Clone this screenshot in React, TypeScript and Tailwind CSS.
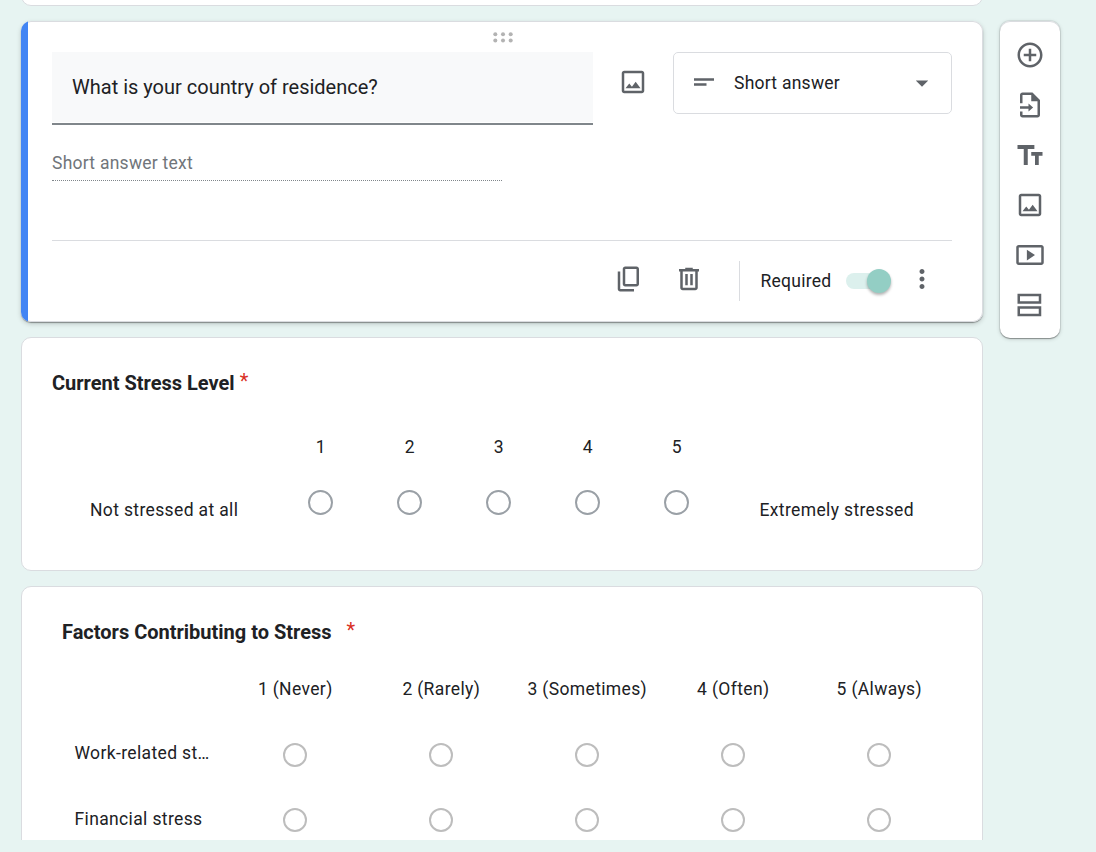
import type { ReactNode } from 'react';

const paths = {
  image:
    'M19 5v14H5V5h14m0-2H5c-1.1 0-2 .9-2 2v14c0 1.1.9 2 2 2h14c1.1 0 2-.9 2-2V5c0-1.1-.9-2-2-2zm-4.86 8.86l-3 3.87L9 13.14 6 17h12l-3.86-5.14z',
  shortText: 'M4 9h16v2H4V9zm0 4h10v2H4v-2z',
  arrow: 'M7 10l5 5 5-5z',
  copy: 'M9 18c-1.1 0-2-.9-2-2V4c0-1.1.9-2 2-2h9c1.1 0 2 .9 2 2v12c0 1.1-.9 2-2 2H9zm0-2h9V4H9v12zm-4 6c-1.1 0-2-.9-2-2V6h2v14h11v2H5z',
  trash:
    'M15 4V3H9v1H4v2h1v13c0 1.1.9 2 2 2h10c1.1 0 2-.9 2-2V6h1V4h-5zm2 15H7V6h10v13zM9 8h2v9H9V8zm4 0h2v9h-2V8z',
  more: 'M12 8c1.1 0 2-.9 2-2s-.9-2-2-2-2 .9-2 2 .9 2 2 2zm0 2c-1.1 0-2 .9-2 2s.9 2 2 2 2-.9 2-2-.9-2-2-2zm0 6c-1.1 0-2 .9-2 2s.9 2 2 2 2-.9 2-2-.9-2-2-2z',
  add: 'M13 7h-2v4H7v2h4v4h2v-4h4v-2h-4V7zm-1-5C6.48 2 2 6.48 2 12s4.48 10 10 10 10-4.48 10-10S17.52 2 12 2zm0 18c-4.41 0-8-3.59-8-8s3.59-8 8-8 8 3.59 8 8-3.59 8-8 8z',
  importFile:
    'M14 2H6c-1.1 0-2 .9-2 2v6.500h2V4h7v5h5v11H6v-2.800H4V20c0 1.1.9 2 2 2h12c1.1 0 2-.9 2-2V8l-6-6zM4 13v2h6.800v2.200L14.500 14l-3.700-3.200V13H4z',
  title: 'M2 4v3.200h5V20h3.200V7.200h5.300V4H2zm20 5.500h-9v3h3V20h3v-7.500h3v-3z',
  video:
    'M9.500 7.700v8.600l6.500-4.300-6.500-4.300zM21 4H3c-1.100 0-2 .9-2 2v12c0 1.100.9 2 2 2h18c1.100 0 2-.9 2-2V6c0-1.100-.9-2-2-2zm0 14H3V6h18v12z',
  section:
    'M2 3v8h19V3H2zm17 6H4V5h15v4zM2 13v8h19v-8H2zm17 6H4v-4h15v4z',
};

function Icon({ name, className = '' }: { name: keyof typeof paths; className?: string }) {
  return (
    <svg viewBox="0 0 24 24" className={`h-[30px] w-[30px] shrink-0 fill-[#5f6368] ${className}`}>
      <path d={paths[name]} />
    </svg>
  );
}

function Card({ className = '', children }: { className?: string; children?: ReactNode }) {
  return (
    <section className={`rounded-[10px] border border-[#dadce0] bg-white ${className}`}>{children}</section>
  );
}

function QuestionEditor() {
  return (
    <section className="flex h-[301px] overflow-hidden rounded-[10px] bg-white shadow-[inset_0_0_0_1px_#dadce0,0_1px_1px_rgba(0,0,0,0.35),0_2px_5px_rgba(0,0,0,0.18)]">
      <div className="w-[7px] shrink-0 bg-[#4285f4]" />
      <div className="flex grow flex-col pr-[31px] pl-6">
        <div className="flex h-[31px] justify-center pt-[11px] pl-[2px]">
          <svg viewBox="0 0 20 12" className="h-3 w-5 fill-[#b3b3b3]">
            <circle cx="2.300" cy="2.200" r="2" />
            <circle cx="10" cy="2.200" r="2" />
            <circle cx="17.700" cy="2.200" r="2" />
            <circle cx="2.300" cy="8.500" r="2" />
            <circle cx="10" cy="8.500" r="2" />
            <circle cx="17.700" cy="8.500" r="2" />
          </svg>
        </div>
        <div className="flex items-start">
          <div className="w-[541px] border-b-2 border-[#80868b]">
            <div className="mb-px h-[70px] bg-[#f8f9fa] pt-[20px] pl-5 text-[20px] leading-[30px] tracking-normal">
              What is your country of residence?
            </div>
          </div>
          <Icon name="image" className="mt-[15px] ml-[25px]" />
          <div className="ml-[25px] flex h-[62px] w-[279px] items-start rounded-[5px] border border-[#dadce0] pt-[14px] pl-[15px]">
            <Icon name="shortText" />
            <span className="ml-[15px] w-[173px] leading-8">Short answer</span>
            <Icon name="arrow" className="mt-[1px]" />
          </div>
        </div>
        <div className="mt-[22px] h-[34px] w-[450px] border-b border-dotted border-[#80868b] leading-8 text-[#70757a]">
          Short answer text
        </div>
        <div className="mt-[59px] flex items-start border-t border-[#dadce0]">
          <Icon name="copy" className="mt-[22.500px] ml-[562px]" />
          <Icon name="trash" className="mt-[22.500px] ml-[30px]" />
          <div className="mt-5 ml-[35px] h-10 w-px bg-[#dadce0]" />
          <span className="mt-6 ml-[20.500px] w-[85.500px] leading-8">Required</span>
          <div className="mt-[27.500px] flex h-[25px] w-[46px] items-center">
            <div className="h-4 w-[33px] rounded-l-full bg-[#dcf0ed]" />
            <div className="-ml-3 h-6 w-6 shrink-0 rounded-full bg-[#93cec4] shadow-[0_2px_3px_rgba(0,0,0,0.3)]" />
          </div>
          <Icon name="more" className="mt-[22.500px] ml-[15px]" />
        </div>
      </div>
    </section>
  );
}

const levels = ['1', '2', '3', '4', '5'];
const frequencies = ['1 (Never)', '2 (Rarely)', '3 (Sometimes)', '4 (Often)', '5 (Always)'];
const factors = ['Work-related st…', 'Financial stress'];

function StressLevel() {
  return (
    <Card className="mt-[15px] h-[234px] pl-[30px]">
      <h2 className="flex pt-[30px] text-[20px] leading-[30px] font-bold tracking-normal">
        Current Stress Level
        <span className="ml-[5px] text-[20px] leading-[26px] font-normal text-[#d93025]">*</span>
      </h2>
      <div className="flex pt-[33px] tracking-[0.36px]">
        <div className="w-[224px] pt-[63px] pl-[38px] leading-8">Not stressed at all</div>
        <div className="grid w-[445px] grid-cols-5">
          {levels.map((level) => (
            <div key={level} className="flex flex-col items-center">
              <span className="pl-[0.5px] leading-8">{level}</span>
              <span className="mt-[27px] h-[25px] w-[25px] rounded-full border-2 border-[#9aa0a6]" />
            </div>
          ))}
        </div>
        <div className="pt-[63px] pl-[38.500px] leading-8">Extremely stressed</div>
      </div>
    </Card>
  );
}

function StressFactors() {
  return (
    <Card className="mt-[15px] h-[300px] pl-10 tracking-[0.36px]">
      <h2 className="flex pt-[30px] text-[20px] leading-[30px] font-bold tracking-normal">
        Factors Contributing to Stress
        <span className="ml-[15px] text-[20px] leading-[26px] font-normal text-[#d93025]">*</span>
      </h2>
      <div className="mt-[26px] ml-[160px] grid w-[730px] grid-cols-5 text-center leading-8">
        {frequencies.map((label) => (
          <span key={label} className="pl-[0.5px]">{label}</span>
        ))}
      </div>
      <div className="mt-[17px]">
        {factors.map((factor) => (
          <div key={factor} className="group flex h-[65px] items-center">
            <span className="-mt-[3px] w-[160px] pl-[12.500px] leading-8 group-last:-mt-[2px]">{factor}</span>
            <div className="grid w-[730px] grid-cols-5 justify-items-center">
              {levels.map((level) => (
                <span key={level} className="h-6 w-6 rounded-full border-2 border-[#bdbdbd]" />
              ))}
            </div>
          </div>
        ))}
      </div>
    </Card>
  );
}

export default function App() {
  return (
    <div
      className="h-[852px] w-[1096px] overflow-hidden bg-[#e7f4f2] text-[17.5px] tracking-[0.25px] text-[#202124]"
      style={{ fontFamily: 'Roboto, sans-serif' }}
    >
      <div className="flex h-[840px] items-start overflow-hidden pl-[21px]">
        <main className="w-[962px] shrink-0">
          <div className="h-[6px] overflow-hidden">
            <Card className="-mt-[34px] h-10" />
          </div>
          <div className="h-[15px]" />
          <QuestionEditor />
          <StressLevel />
          <StressFactors />
        </main>
        <aside className="mt-[21px] ml-[17px] flex h-[317px] w-[60px] shrink-0 flex-col items-center gap-5 rounded-[10px] bg-white pt-[18.500px] shadow-[inset_0_1px_0_#dadce0,0_0_0_1px_rgba(0,0,0,0.06),0_1px_1px_rgba(0,0,0,0.3),0_1px_4px_rgba(0,0,0,0.18)]">
          <Icon name="add" />
          <Icon name="importFile" />
          <Icon name="title" />
          <Icon name="image" />
          <Icon name="video" />
          <Icon name="section" />
        </aside>
      </div>
    </div>
  );
}
